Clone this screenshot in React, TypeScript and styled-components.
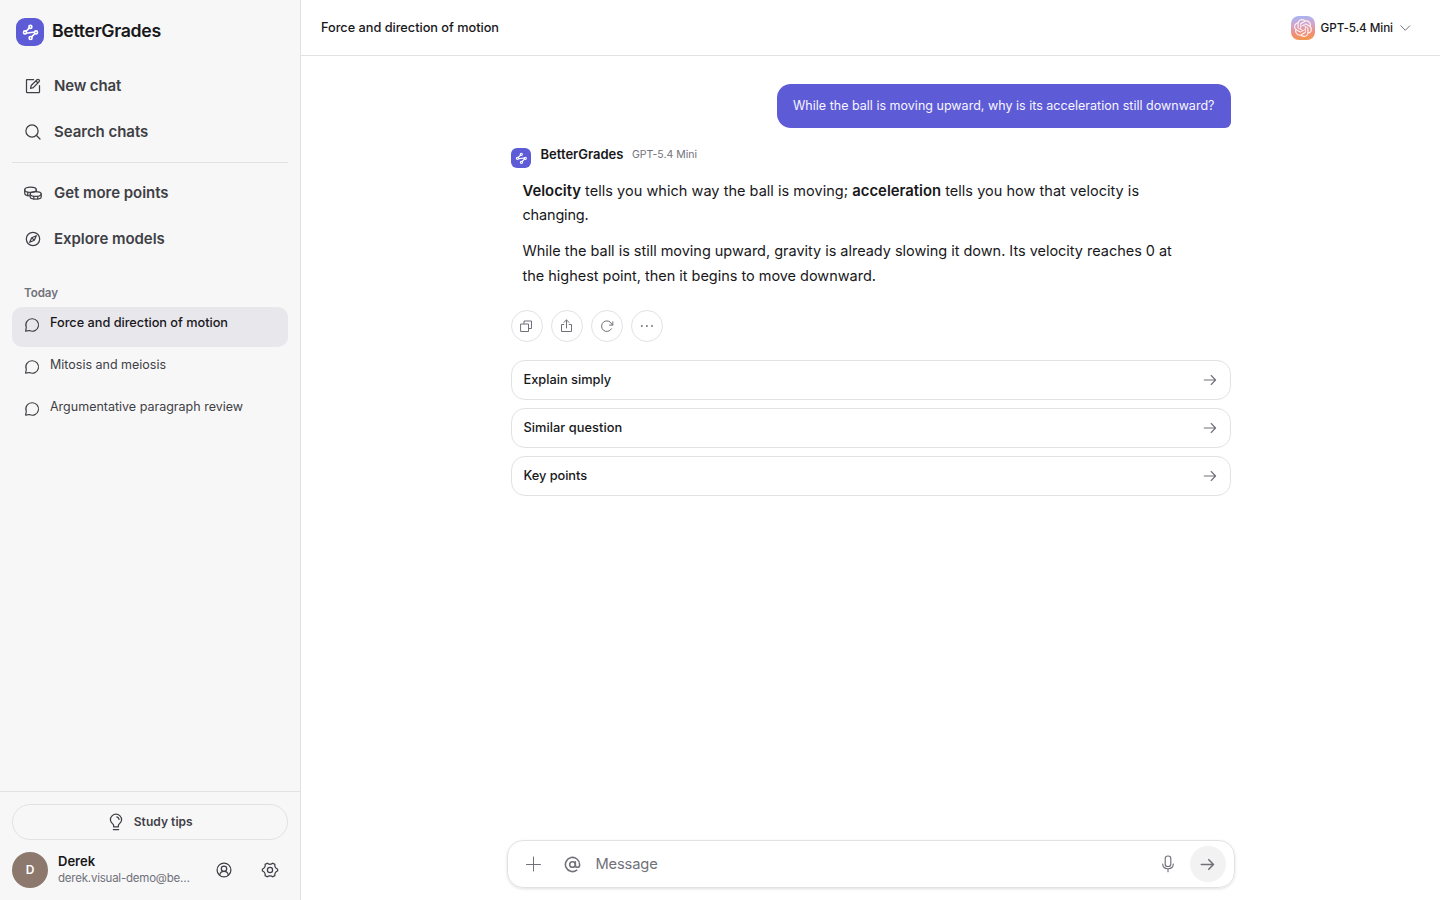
import React from 'react';
import styled, { createGlobalStyle, css } from 'styled-components';
import { AtSign } from 'lucide-react';
import { SiOpenai } from 'react-icons/si';

const color = {
  ink: '#18181b',
  strong: '#3f3f46',
  muted: '#71717a',
  line: '#e2e2e5',
  sidebar: '#f7f7f7',
  selected: '#e8e7ec',
  accent: '#5e5bd6',
};

const GlobalStyle = createGlobalStyle`
  *, *::before, *::after { box-sizing: border-box; }
  body { margin: 0; background: #fff; color: ${color.ink}; font-family: Inter, "Liberation Sans", sans-serif; -webkit-font-smoothing: antialiased; }
  button { font: inherit; color: inherit; background: none; border: 0; padding: 0; margin: 0; cursor: pointer; }
  p { margin: 0; }
`;

const tracking = css<{ $track?: number }>`
  letter-spacing: ${p => p.$track ?? 0}px;
  white-space: nowrap;
`;

/* ---------- icons ---------- */

const Glyph = styled.svg<{ $size: number; $weight?: number }>`
  display: block;
  flex: none;
  width: ${p => p.$size}px;
  height: ${p => p.$size}px;
  fill: none;
  stroke: currentColor;
  stroke-width: ${p => p.$weight ?? 1.25};
  stroke-linecap: round;
  stroke-linejoin: round;
`;

const ComposeIcon = () => (
  <Glyph $size={18} viewBox="0 0 18 18">
    <path d="M9.600 2.500H3a.5.5 0 0 0-.5.500v12a.5.5 0 0 0 .5.500h12a.5.5 0 0 0 .5-.500V8.600" />
    <path d="m7.200 8.500 5.800-5.700a1.400 1.400 0 0 1 2 2L9.300 10.600l-2.800.8zM12 4l2 2" />
  </Glyph>
);
const SearchIcon = () => (
  <Glyph $size={18} viewBox="0 0 18 18">
    <circle cx="8" cy="8" r="6.100" /><path d="m12.500 12.500 3.500 3.500" />
  </Glyph>
);
const CoinsIcon = () => (
  <Glyph $size={18} viewBox="0 0 18 18">
    <ellipse cx="6.500" cy="5.700" rx="5.800" ry="2.700" />
    <path d="M.7 5.700v3.200c0 1.500 2 2.700 4.700 2.900M12.300 5.700v1.900M3.800 8.200v3" />
    <path d="M6.200 10.100v3c0 1.200 2.400 2.100 5.500 2.100s5.500-.9 5.500-2.100v-3.200" />
    <ellipse cx="11.700" cy="10" rx="5.500" ry="2.400" />
    <path d="M9.800 12.400v2.500M13.700 12.400v2.500" />
  </Glyph>
);
const CompassIcon = () => (
  <Glyph $size={18} viewBox="0 0 18 18">
    <circle cx="9" cy="9" r="6.700" /><path d="m12.300 5.700-2 4.600-4.600 2 2-4.600zM7.900 7.900l2.200 2.200" />
  </Glyph>
);
const ChatIcon = () => (
  <Glyph $size={16} $weight={1.150} viewBox="0 0 16 16">
    <path d="M8.300 1.800a6.200 6.200 0 1 1-2.800 11.700l-3.900.6.700-3.700A6.200 6.200 0 0 1 8.300 1.800z" />
  </Glyph>
);
const BulbIcon = () => (
  <Glyph $size={18} viewBox="0 0 18 18">
    <path d="M6.600 13.800v-1.600C6.400 10.800 3.400 9.800 3.400 6.800a5.600 5.600 0 0 1 11.200 0c0 3-3 4-3.200 5.400v1.600zM6.300 16.500h5.400M9.800 3.900a3.200 3.200 0 0 1 2.300 2.500" />
  </Glyph>
);
const AccountIcon = () => (
  <Glyph $size={18} viewBox="0 0 18 18">
    <circle cx="9" cy="9" r="6.900" /><circle cx="9" cy="7.700" r="2.700" />
    <path d="M4.700 14.200c.3-2.200 2-3.800 4.300-3.800s4 1.600 4.300 3.800" />
  </Glyph>
);
const GearIcon = () => (
  <Glyph $size={18} viewBox="0 0 18 18">
    <circle cx="9" cy="9" r="2.600" />
    <path d="M6.200 2.200c1.100 1.400 4.500 1.400 5.600 0l2.100 1.200c-.6 1.800.9 4.400 2.700 4.600v2c-1.800.2-3.300 2.800-2.700 4.600l-2.100 1.200c-1.100-1.400-4.500-1.400-5.600 0l-2.100-1.200c.6-1.800-.9-4.400-2.700-4.600V8c1.800-.2 3.300-2.800 2.700-4.600z" />
  </Glyph>
);
const ChevronIcon = () => (
  <Glyph $size={16} $weight={1} viewBox="0 0 16 16"><path d="m3.800 5.800 4.500 4.500 4.500-4.500" /></Glyph>
);
const CopyIcon = () => (
  <Glyph $size={16} $weight={1} viewBox="0 0 16 16">
    <path d="M2 6h7.500v7.500H2zM5 5.800V3h7.500v7.500H9.700" />
  </Glyph>
);
const ShareIcon = () => (
  <Glyph $size={16} $weight={1} viewBox="0 0 16 16">
    <path d="M4.800 6.500H2.500v7h10v-7h-2.300M7.500 10V2M5 4.400 7.500 1.900 10 4.400" />
  </Glyph>
);
const RetryIcon = () => (
  <Glyph $size={16} $weight={1} viewBox="0 0 16 16">
    <path d="M12.500 10.800a5.300 5.300 0 1 1 .2-4.800l.9 1M13.800 3.800v3.300h-3.300" />
  </Glyph>
);
const MoreIcon = () => (
  <Glyph $size={16} $weight={1.900} viewBox="0 0 16 16"><path d="M2.800 8h.01M7.900 8h.01M13 8h.01" /></Glyph>
);
const ArrowIcon = ({ size = 16, weight = 1.100 }: { size?: number; weight?: number }) => (
  <Glyph $size={size} $weight={weight} viewBox="0 0 16 16"><path d="M2.200 8h11.400M9.200 3.500 13.600 8l-4.400 4.500" /></Glyph>
);
const PlusIcon = () => (
  <Glyph $size={16} $weight={1} viewBox="0 0 16 16"><path d="M7.500 1v14M.5 8.500h14" /></Glyph>
);
const MicIcon = () => (
  <Glyph $size={18} $weight={1.150} viewBox="0 0 18 18">
    <rect x="6.200" y="1" width="5.600" height="10.500" rx="2.600" />
    <path d="M3.700 9c0 3 2.300 4.700 5.300 4.700s5.300-1.700 5.300-4.700M9 13.700v3" />
  </Glyph>
);

const MarkTile = styled.span<{ $size: number }>`
  display: block;
  flex: none;
  width: ${p => p.$size}px;
  height: ${p => p.$size}px;
  border-radius: ${p => (p.$size > 24 ? 9 : 6)}px;
  background: ${color.accent};
  color: #fff;
`;
const BrandMark = ({ size }: { size: number }) => (
  <MarkTile $size={size}>
    <Glyph $size={size} $weight={1.600} viewBox="0 0 28 28">
      <circle cx="14.400" cy="8.900" r="1.500" />
      <circle cx="9" cy="14.400" r="1.500" />
      <circle cx="20" cy="14.400" r="1.500" />
      <circle cx="14.600" cy="20" r="1.500" />
      <path d="m13.400 9.900-3.300 3.400M10.600 14.900c2.300.3 3.200-.9 7.700-.6M18.900 15.500l-3.300 3.400" />
    </Glyph>
  </MarkTile>
);

/* ---------- sidebar ---------- */

const Shell = styled.div`display: flex; height: 100vh; overflow: hidden;`;
const Sidebar = styled.aside`
  display: flex;
  flex-direction: column;
  width: 301px;
  flex: none;
  background: ${color.sidebar};
  border-right: 1px solid ${color.line};
`;
const Brand = styled.div`display: flex; gap: 8px; height: 63px; padding: 18px 16px 0;`;
const BrandName = styled.span`
  font-size: 17.700px; font-weight: 600; line-height: 26px; ${tracking}
`;
const Nav = styled.nav`display: flex; flex-direction: column; padding: 0 12px;`;
const NavItem = styled.button`
  display: flex;
  align-items: center;
  gap: 12px;
  height: 46px;
  padding: 0 12px 1px;
  color: ${color.strong};
  font-size: 15px;
  font-weight: 600;
  svg { margin-top: 1px; }
`;
const Label = styled.span`${tracking}`;
const Divider = styled.div`height: 1px; margin: 7px 0; background: ${color.line};`;
const History = styled.section`display: flex; flex-direction: column; gap: 2px; padding: 23px 12px 0;`;
const HistoryHeading = styled.h2`
  margin: 0 0 3px; padding-left: 12px; font-size: 11.600px; font-weight: 600; line-height: 17px; color: ${color.muted}; ${tracking}
`;
const HistoryItem = styled.button<{ $active?: boolean }>`
  display: flex;
  gap: 10px;
  height: 40px;
  padding: 7px 12px 0;
  border-radius: 10px;
  font-size: ${p => (p.$active ? 12.750 : 12.500)}px;
  line-height: 18px;
  font-weight: ${p => (p.$active ? 500 : 400)};
  color: ${p => (p.$active ? color.ink : color.strong)};
  background: ${p => (p.$active ? color.selected : 'transparent')};
  svg { margin-top: 3px; color: ${color.strong}; }
`;
const SidebarFooter = styled.footer`
  margin-top: auto; height: 109px; padding: 12px; border-top: 1px solid ${color.line};
`;
const TipsButton = styled.button`
  display: flex;
  align-items: center;
  justify-content: center;
  gap: 8.500px;
  width: 100%;
  height: 36px;
  border: 1px solid ${color.line};
  border-radius: 18px;
  font-size: 12px;
  font-weight: 600;
  color: ${color.strong};
  span { padding-bottom: 2px; }
`;
const Account = styled.div`display: flex; align-items: center; height: 36px; margin-top: 12px;`;
const Avatar = styled.span`
  display: grid; place-items: center; width: 36px; height: 36px; padding-bottom: 1px; border-radius: 50%;
  background: #8d786e; color: #fff; font-size: 12px; font-weight: 600;
`;
const Identity = styled.div`display: flex; flex-direction: column; flex: 1; margin: 0 0 2px 10px;`;
const UserName = styled.span`font-size: 13px; font-weight: 600; line-height: 17px; ${tracking}`;
const UserMail = styled.span`font-size: 11.500px; line-height: 16px; color: ${color.muted}; ${tracking}`;
const AccountAction = styled.button`
  display: grid; place-items: center; width: 36px; height: 36px; margin-left: 10px; color: ${color.strong};
`;

/* ---------- conversation ---------- */

const Main = styled.main`display: flex; flex-direction: column; flex: 1; min-width: 0; background: #fff;`;
const TopBar = styled.header`
  display: flex;
  align-items: center;
  justify-content: space-between;
  height: 56px;
  padding: 0 27px 0 20px;
  border-bottom: 1px solid ${color.line};
`;
const Title = styled.h1`margin: 0; padding-bottom: 1px; font-size: 12.750px; font-weight: 500; ${tracking}`;
const ModelButton = styled.button`
  display: flex; align-items: center; font-size: 11.700px; font-weight: 500;
  > svg { margin-left: 4px; color: ${color.muted}; }
`;
const ModelLogo = styled.span`
  display: grid; place-items: center; width: 24px; height: 24px; margin-right: 6px; border-radius: 8px;
  background: linear-gradient(175deg, #a9b4f1 4%, #d3a5cb 38%, #f08d79 70%, #f19a48 100%);
  svg { width: 18px; height: 18px; color: #fff0ed; }
`;
const Thread = styled.div`
  display: flex; flex-direction: column; width: 720px; flex: 1; margin: 0 auto; padding-top: 28px;
`;
const UserBubble = styled.div`
  align-self: flex-end;
  height: 44px;
  padding: 0 16px;
  border-radius: 14px 14px 6px 14px;
  background: ${color.accent};
  color: #f7f6ff;
  font-size: 12.500px;
  line-height: 43px;
  ${tracking}
`;
const Byline = styled.div`display: flex; height: 20px; margin-top: 20px;`;
const Author = styled.span`margin-left: 10px; font-size: 13px; font-weight: 600; line-height: 12px; ${tracking}`;
const AuthorModel = styled.span`
  margin-left: 8.500px; font-size: 10.500px; line-height: 13px; color: ${color.muted}; ${tracking}
`;
const Answer = styled.div`
  display: flex;
  flex-direction: column;
  gap: 11.500px;
  padding: 11px 12px 0;
  font-size: 14.500px;
  line-height: 24.400px;
  strong { font-size: 14.850px; font-weight: 600; letter-spacing: 0; line-height: 1; }
`;
const Line = styled.span`display: block; ${tracking}`;
const Actions = styled.div`display: flex; gap: 8px; margin-top: 21.400px;`;
const RoundButton = styled.button`
  display: grid; place-items: center; width: 32px; height: 32px;
  border: 1px solid ${color.line}; border-radius: 50%; color: ${color.muted};
`;
const Suggestions = styled.div`display: flex; flex-direction: column; gap: 8px; margin-top: 18px;`;
const Suggestion = styled.button`
  display: flex; align-items: center; justify-content: space-between;
  height: 40px; padding: 0 12px; border: 1px solid ${color.line}; border-radius: 14px;
  font-size: 12.800px; font-weight: 500;
  svg { color: ${color.muted}; }
`;
const Composer = styled.div`
  display: flex;
  align-items: center;
  width: 728px;
  height: 48px;
  margin: 0 auto 12px;
  padding: 0 8px 0 17px;
  border: 1px solid ${color.line};
  border-radius: 16px;
  box-shadow: 0 1px 3px rgba(0, 0, 0, 0.12);
  color: ${color.muted};
`;
const ToolButton = styled.button`display: grid; place-items: center; width: 18px; height: 32px;`;
const MentionButton = styled(ToolButton)`margin-left: 20.500px;`;
const Placeholder = styled.span`flex: 1; margin-left: 14.500px; padding-bottom: 1px; font-size: 14.700px; ${tracking}`;
const SendButton = styled.button`
  display: grid; place-items: center; width: 36px; height: 36px; margin-left: 13px;
  border-radius: 50%; background: #f2f2f3;
`;

const chats = [
  { title: 'Force and direction of motion', track: -0.025, active: true },
  { title: 'Mitosis and meiosis', track: 0 },
  { title: 'Argumentative paragraph review', track: 0 },
];
const prompts = [
  { text: 'Explain simply', track: 0 },
  { text: 'Similar question', track: 0.050 },
  { text: 'Key points', track: -0.050 },
];

export default function App() {
  return (
    <Shell>
      <GlobalStyle />
      <Sidebar>
        <Brand><BrandMark size={28} /><BrandName $track={-0.340}>BetterGrades</BrandName></Brand>
        <Nav>
          <NavItem><ComposeIcon /><Label $track={-0.150}>New chat</Label></NavItem>
          <NavItem><SearchIcon /><Label $track={-0.030}>Search chats</Label></NavItem>
          <Divider />
          <NavItem><CoinsIcon /><Label $track={-0.040}>Get more points</Label></NavItem>
          <NavItem><CompassIcon /><Label $track={-0.040}>Explore models</Label></NavItem>
        </Nav>
        <History>
          <HistoryHeading $track={-0.080}>Today</HistoryHeading>
          {chats.map(c => (
            <HistoryItem key={c.title} $active={c.active}><ChatIcon /><Label $track={c.track}>{c.title}</Label></HistoryItem>
          ))}
        </History>
        <SidebarFooter>
          <TipsButton><BulbIcon /><Label $track={0.050}>Study tips</Label></TipsButton>
          <Account>
            <Avatar>D</Avatar>
            <Identity>
              <UserName>Derek</UserName>
              <UserMail $track={-0.220}>derek.visual-demo@be…</UserMail>
            </Identity>
            <AccountAction><AccountIcon /></AccountAction>
            <AccountAction><GearIcon /></AccountAction>
          </Account>
        </SidebarFooter>
      </Sidebar>
      <Main>
        <TopBar>
          <Title $track={-0.025}>Force and direction of motion</Title>
          <ModelButton>
            <ModelLogo><SiOpenai /></ModelLogo>
            <Label $track={-0.080}>GPT-5.4 Mini</Label>
            <ChevronIcon />
          </ModelButton>
        </TopBar>
        <Thread>
          <UserBubble $track={0.014}>While the ball is moving upward, why is its acceleration still downward?</UserBubble>
          <Byline>
            <BrandMark size={20} />
            <Author>BetterGrades</Author>
            <AuthorModel>GPT-5.4 Mini</AuthorModel>
          </Byline>
          <Answer>
            <p>
              <Line $track={0.030}><strong>Velocity</strong> tells you which way the ball is moving; <strong>acceleration</strong> tells you how that velocity is</Line>
              <Line $track={-0.170}>changing.</Line>
            </p>
            <p>
              <Line $track={-0.025}>While the ball is still moving upward, gravity is already slowing it down. Its velocity reaches 0 at</Line>
              <Line $track={-0.025}>the highest point, then it begins to move downward.</Line>
            </p>
          </Answer>
          <Actions>
            <RoundButton><CopyIcon /></RoundButton>
            <RoundButton><ShareIcon /></RoundButton>
            <RoundButton><RetryIcon /></RoundButton>
            <RoundButton><MoreIcon /></RoundButton>
          </Actions>
          <Suggestions>
            {prompts.map(p => (
              <Suggestion key={p.text}><Label $track={p.track}>{p.text}</Label><ArrowIcon /></Suggestion>
            ))}
          </Suggestions>
        </Thread>
        <Composer>
          <ToolButton><PlusIcon /></ToolButton>
          <MentionButton><AtSign size={17} strokeWidth={2.200} /></MentionButton>
          <Placeholder $track={-0.160}>Message</Placeholder>
          <ToolButton><MicIcon /></ToolButton>
          <SendButton><ArrowIcon size={17} weight={1.500} /></SendButton>
        </Composer>
      </Main>
    </Shell>
  );
}
